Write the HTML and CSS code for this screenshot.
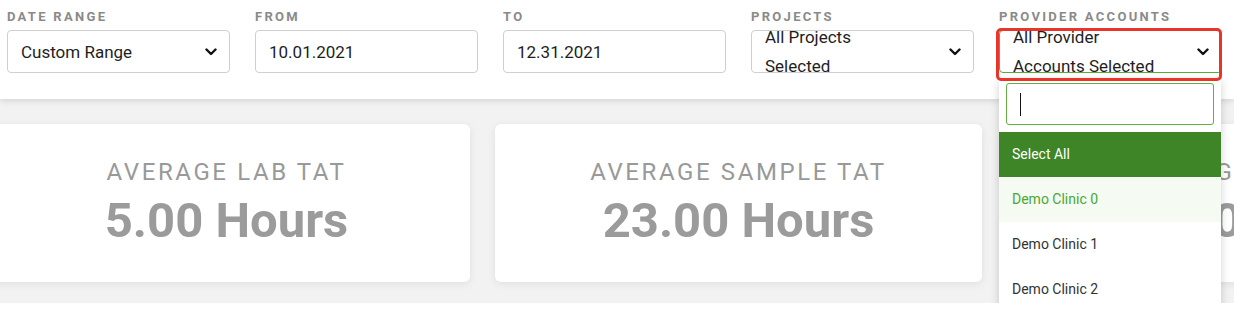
FILE: index.html
```html
<!DOCTYPE html>
<html lang="en">
<head>
    <meta charset="UTF-8">
    <meta name="viewport" content="width=device-width, initial-scale=1.0">
    <title>Turnaround Report</title>
    <link rel="stylesheet" href="styles.css">
</head>
<body>
<div class="filters">
    <div class="field">
        <div class="field-label">Date Range</div>
        <div class="control">
            <span>Custom Range</span>
            <svg class="chevron" width="12" height="8" viewBox="0 0 12 8"><path d="M1.5 1.5 6 6l4.5-4.5" fill="none" stroke="#111" stroke-width="2.4" stroke-linecap="round" stroke-linejoin="round"/></svg>
        </div>
    </div>
    <div class="field">
        <div class="field-label">From</div>
        <div class="control">10.01.2021</div>
    </div>
    <div class="field">
        <div class="field-label">To</div>
        <div class="control">12.31.2021</div>
    </div>
    <div class="field">
        <div class="field-label">Projects</div>
        <div class="control multi">
            <span class="value">All Projects Selected</span>
            <svg class="chevron" width="12" height="8" viewBox="0 0 12 8"><path d="M1.5 1.5 6 6l4.5-4.5" fill="none" stroke="#111" stroke-width="2.4" stroke-linecap="round" stroke-linejoin="round"/></svg>
        </div>
    </div>
    <div class="field provider">
        <div class="field-label">Provider Accounts</div>
        <div class="control multi focused">
            <span class="value">All Provider Accounts Selected</span>
            <svg class="chevron" width="12" height="8" viewBox="0 0 12 8"><path d="M1.5 1.5 6 6l4.5-4.5" fill="none" stroke="#111" stroke-width="2.4" stroke-linecap="round" stroke-linejoin="round"/></svg>
        </div>
        <div class="menu">
            <div class="search"><span class="caret"></span></div>
            <div class="option selected">Select All</div>
            <div class="option active">Demo Clinic 0</div>
            <div class="option">Demo Clinic 1</div>
            <div class="option">Demo Clinic 2</div>
        </div>
        <div class="highlight"></div>
    </div>
</div>

<div class="summary">
    <div class="cards">
        <div class="card">
            <div class="card-title">Average Lab TAT</div>
            <div class="card-value">5.00 Hours</div>
        </div>
        <div class="card">
            <div class="card-title">Average Sample TAT</div>
            <div class="card-value">23.00 Hours</div>
        </div>
        <div class="card">
            <div class="card-title">Average Run TAT</div>
            <div class="card-value">10.00 Hours</div>
        </div>
    </div>
</div>
</body>
</html>
```

FILE: styles.css
```css
body {
    margin: 0;
    font-family: Roboto, "Liberation Sans", sans-serif;
    background-color: #ffffff;
    color: #222;
    overflow: hidden;
}
.filters {
    position: relative;
    z-index: 2;
    display: flex;
    gap: 25px;
    padding: 9px 0 26px 7px;
    background-color: #fff;
    box-shadow: 0 2px 6px rgba(0, 0, 0, 0.12);
}
.field {
    width: 223px;
    flex: 0 0 223px;
}
.field-label {
    font-size: 13px;
    line-height: 16px;
    font-weight: 700;
    letter-spacing: 2.3px;
    text-transform: uppercase;
    color: #8a8a8a;
    margin-bottom: 5px;
}
.control {
    box-sizing: border-box;
    height: 43px;
    display: flex;
    align-items: center;
    justify-content: space-between;
    padding: 0 12px 0 13px;
    border: 1px solid #cfcfcf;
    border-radius: 4px;
    font-size: 17px;
    color: #1e1e1e;
    background-color: #fff;
}
.control.multi {
    line-height: 29px;
}
.control.multi .value {
    width: 150px;
}
.control.focused {
    border-color: #58ad3a;
}
.chevron {
    flex: 0 0 auto;
}
.provider {
    position: relative;
}
.highlight {
    position: absolute;
    top: 19px;
    left: -3px;
    width: 226px;
    height: 53px;
    box-sizing: border-box;
    border: 3px solid #e8342a;
    border-radius: 5px;
}
.menu {
    position: absolute;
    top: 69px;
    left: 0;
    width: 222px;
    padding-top: 5px;
    background-color: #fff;
    border-radius: 0 0 4px 4px;
    box-shadow: 0 3px 10px rgba(0, 0, 0, 0.18);
}
.search {
    box-sizing: border-box;
    height: 42px;
    margin: 0 7px 7px;
    border: 1px solid #62b043;
    border-radius: 3px;
    padding: 9px 0 0 13px;
}
.caret {
    display: block;
    width: 1px;
    height: 23px;
    background-color: #111;
}
.option {
    height: 45px;
    line-height: 45px;
    padding-left: 13px;
    font-size: 14px;
    color: #333;
}
.option.selected {
    background-color: #3d8526;
    color: #fff;
}
.option.active {
    background-color: #f5faf2;
    color: #4aa833;
}
.summary {
    background-color: #f2f2f2;
    padding: 25px 0 21px;
    overflow: hidden;
}
.cards {
    display: flex;
    gap: 25px;
    margin-left: -17px;
}
.card {
    flex: 0 0 487px;
    box-sizing: border-box;
    height: 158px;
    padding-top: 34px;
    background-color: #fff;
    border-radius: 6px;
    box-shadow: 0 2px 8px rgba(0, 0, 0, 0.08);
    text-align: center;
}
.card-title {
    font-size: 24px;
    line-height: 28px;
    letter-spacing: 2.6px;
    text-transform: uppercase;
    color: #999;
    margin-bottom: 7px;
}
.card-value {
    font-size: 49px;
    line-height: 56px;
    font-weight: 700;
    color: #9b9b9b;
}
```
